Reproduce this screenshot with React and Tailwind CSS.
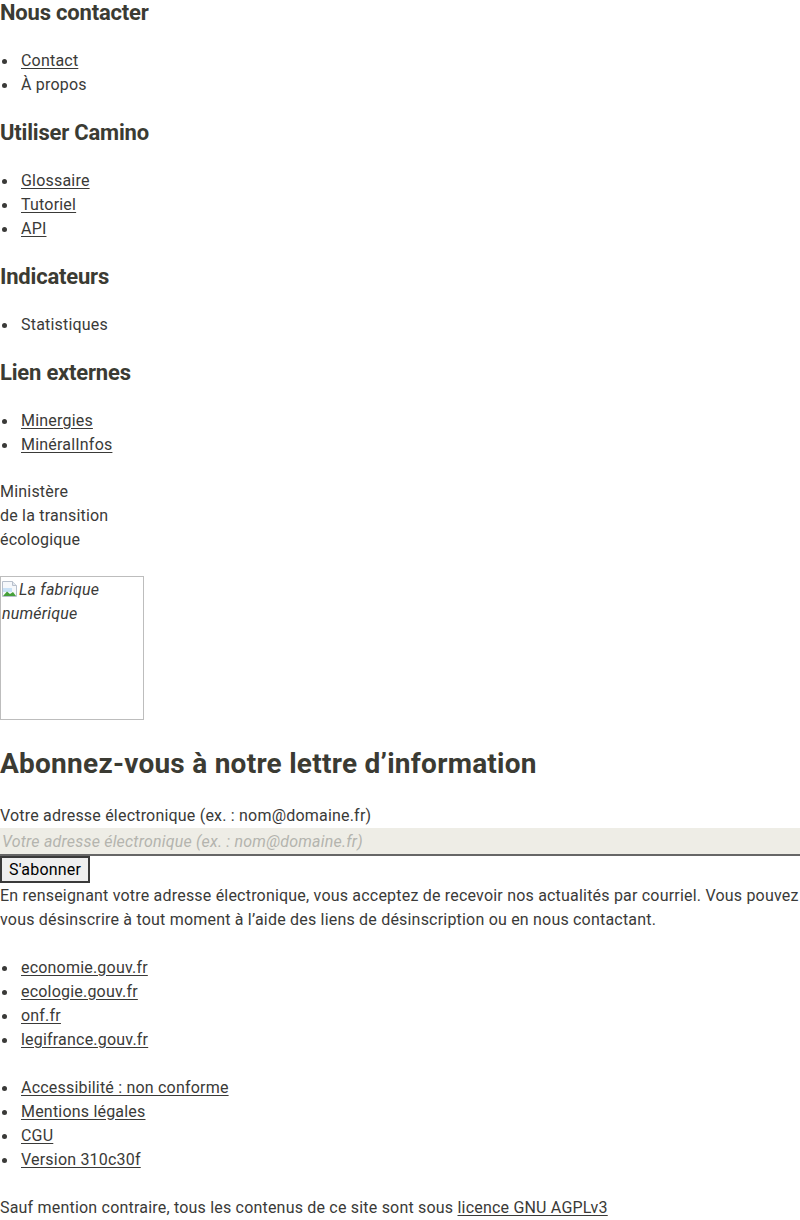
const sections = [
  { title: 'Nous contacter', items: [{ label: 'Contact', link: true }, { label: 'À propos' }] },
  {
    title: 'Utiliser Camino',
    items: [
      { label: 'Glossaire', link: true },
      { label: 'Tutoriel', link: true },
      { label: 'API', link: true },
    ],
  },
  { title: 'Indicateurs', items: [{ label: 'Statistiques' }] },
  {
    title: 'Lien externes',
    items: [
      { label: 'Minergies', link: true },
      { label: 'MinéralInfos', link: true },
    ],
  },
];

const gouvLinks = ['economie.gouv.fr', 'ecologie.gouv.fr', 'onf.fr', 'legifrance.gouv.fr'];
const bottomLinks = ['Accessibilité : non conforme', 'Mentions légales', 'CGU', 'Version 310c30f'];

// puce : petit disque à gauche, le texte démarre à 21px
function Puce({ children }) {
  return (
    <li className="flex items-center">
      <span className="ml-[2px] mr-[14px] h-[5px] w-[5px] shrink-0 rounded-full bg-[#3a3a38]" />
      <span>{children}</span>
    </li>
  );
}

function Liste({ items }) {
  return (
    <ul className="mb-[23px]">
      {items.map((it) => (
        <Puce key={it.label}>
          {it.link ? <a className="underline underline-offset-2">{it.label}</a> : it.label}
        </Puce>
      ))}
    </ul>
  );
}

function BrokenImage() {
  return (
    <svg width="16" height="16" viewBox="0 0 16 16" className="mr-px inline-block align-[-2px]">
      <path d="M0.5 0.5h10l4 4v11h-14z" fill="#f6f8fb" stroke="#b8c0cc" />
      <path d="M10.5 0.5v4h4" fill="#e2e7ee" stroke="#b8c0cc" />
      <path d="M1 7h9v4H1z" fill="#c9e1f6" />
      <path d="M1 15l4-4.5 3 2.5 3-2 3 4z" fill="#45a03a" />
    </svg>
  );
}

export default function App() {
  return (
    <div
      className="min-h-[1220px] bg-white text-[16px] leading-6 tracking-[0.2px] text-[#3a3a38]"
      style={{ fontFamily: 'Roboto, "Liberation Sans", sans-serif' }}
    >
      {sections.map((s) => (
        <div key={s.title}>
          <h3 className="mb-[23px] text-[22px] font-bold leading-[26px] tracking-[-0.2px] text-[#3b3b33]">
            {s.title}
          </h3>
          <Liste items={s.items} />
        </div>
      ))}

      <p className="mb-6 mt-px">
        Ministère
        <br />
        de la transition
        <br />
        écologique
      </p>

      <div className="h-[144px] w-[144px] border border-[#bdbdbd] px-px pt-[1px] italic">
        <BrokenImage />
        La fabrique numérique
      </div>

      <h2 className="mb-5 mt-6 text-[28px] font-bold leading-10 tracking-[0.25px] text-[#3b3b33]">
        Abonnez-vous à notre lettre d’information
      </h2>

      <form onSubmit={(e) => e.preventDefault()}>
        <label className="block">Votre adresse électronique (ex. : nom@domaine.fr)</label>
        <input
          type="email"
          placeholder="Votre adresse électronique (ex. : nom@domaine.fr)"
          className="block h-7 w-full border-b-2 border-[#666666] bg-[#eeede6] px-[2px] leading-6 tracking-[0.2px] outline-none placeholder:italic placeholder:text-[#b4b4ae]"
        />
        <button
          type="submit"
          className="block h-[27px] border-2 border-[#3a3a3a] bg-[#efefef] px-[7px] leading-5 tracking-[0.2px] text-black"
        >
          S'abonner
        </button>
      </form>
      <p className="mb-6 mt-px">
        En renseignant votre adresse électronique, vous acceptez de recevoir nos actualités par courriel. Vous
        pouvez vous désinscrire à tout moment à l’aide des liens de désinscription ou en nous contactant.
      </p>

      <ul className="mb-6">
        {gouvLinks.map((l) => (
          <Puce key={l}>
            <a className="underline underline-offset-2">{l}</a>
          </Puce>
        ))}
      </ul>
      <ul className="mb-6">
        {bottomLinks.map((l) => (
          <Puce key={l}>
            <a className="underline underline-offset-2">{l}</a>
          </Puce>
        ))}
      </ul>
      <p>
        Sauf mention contraire, tous les contenus de ce site sont sous{' '}
        <a className="underline underline-offset-2">licence GNU AGPLv3</a>
      </p>
    </div>
  );
}
